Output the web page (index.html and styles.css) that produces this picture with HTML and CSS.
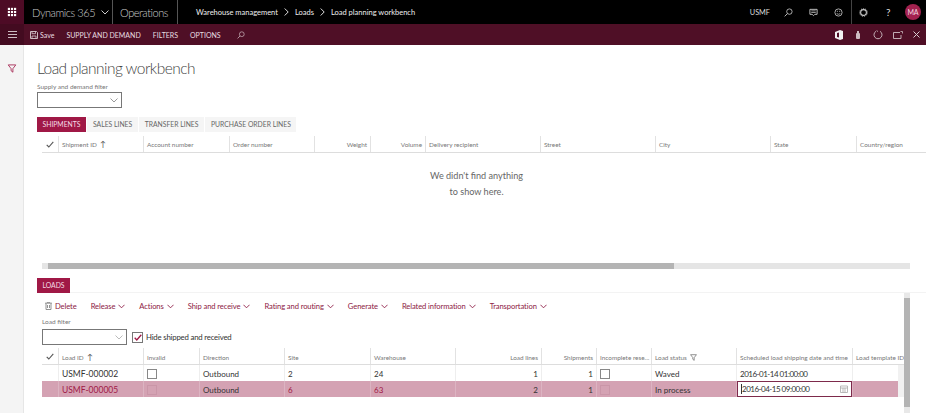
FILE: index.html
```html
<!DOCTYPE html>
<html lang="en">
<head>
    <meta charset="UTF-8">
    <meta name="viewport" content="width=device-width, initial-scale=1.0">
    <title>Load planning workbench</title>
    <link rel="stylesheet" href="styles.css">
</head>
<body>

    <div class="topbar">
        <div class="waffle">
            <svg width="10" height="10" viewBox="0 0 12 12" fill="#fff"><rect x="1" y="1" width="2.6" height="2.6"/><rect x="4.7" y="1" width="2.6" height="2.6"/><rect x="8.4" y="1" width="2.6" height="2.6"/><rect x="1" y="4.7" width="2.6" height="2.6"/><rect x="4.7" y="4.7" width="2.6" height="2.6"/><rect x="8.4" y="4.7" width="2.6" height="2.6"/><rect x="1" y="8.4" width="2.6" height="2.6"/><rect x="4.7" y="8.4" width="2.6" height="2.6"/><rect x="8.4" y="8.4" width="2.6" height="2.6"/></svg>
        </div>
        <div class="brand brand-first"><span>Dynamics 365</span>
            <svg width="8" height="5" viewBox="0 0 8 5"><path d="M.5.5L4 4 7.5.5" fill="none" stroke="#ccc"/></svg>
        </div>
        <div class="brand brand-second">Operations</div>
        <div class="crumbs">
            <span>Warehouse management</span>
            <svg width="5" height="8" viewBox="0 0 5 8"><path d="M.7.5L4.2 4 .7 7.5" fill="none" stroke="#ddd"/></svg>
            <span>Loads</span>
            <svg width="5" height="8" viewBox="0 0 5 8"><path d="M.7.5L4.2 4 .7 7.5" fill="none" stroke="#ddd"/></svg>
            <span>Load planning workbench</span>
        </div>
        <div class="top-right">
            <span class="company">USMF</span>
            <svg class="top-icon" width="9" height="9" viewBox="0 0 10 10"><circle cx="6" cy="4" r="3" fill="none" stroke="#ccc" stroke-width=".9"/><path d="M3.8 6.2L.7 9.3" stroke="#ccc"/></svg>
            <svg class="top-icon" width="9" height="9" viewBox="0 0 10 10"><path d="M1 1.5h8v5.5H6.5L5 8.5 3.5 7H1z" fill="none" stroke="#ccc"/><path d="M2.5 3.2h5M2.5 5h5" stroke="#ccc" stroke-width=".8"/></svg>
            <svg class="top-icon" width="9" height="9" viewBox="0 0 10 10"><circle cx="5" cy="5" r="4" fill="none" stroke="#ccc" stroke-width=".9"/><path d="M3 6.2q2 1.5 4 0" fill="none" stroke="#ccc" stroke-width=".8"/><path d="M3.2 3.7h1M5.8 3.7h1" stroke="#ccc"/></svg>
            <span class="top-divider"></span>
            <svg class="top-icon" width="9" height="9" viewBox="0 0 10 10"><circle cx="5" cy="5" r="3.2" fill="none" stroke="#ccc" stroke-width="1.2"/><circle cx="5" cy="5" r="4.3" fill="none" stroke="#ccc" stroke-width=".9" stroke-dasharray="1.3 1.1"/></svg>
            <span class="help">?</span>
            <span class="avatar">MA</span>
        </div>
    </div>

    <div class="cmdbar">
        <div class="hamburger"><span></span><span></span><span></span></div>
        <div class="cmd-left">
            <span class="cmd-save">
                <svg width="8" height="8" viewBox="0 0 8 8"><path d="M.5.5h6l1 1v6h-7z" fill="none" stroke="#d9ccd0" stroke-width=".9"/><path d="M2 .5v2.200h3.500V.5M2 7.500V5h4v2.500" fill="none" stroke="#d9ccd0" stroke-width=".8"/></svg>
                Save
            </span>
            <span class="cmd-item">SUPPLY AND DEMAND</span>
            <span class="cmd-item">FILTERS</span>
            <span class="cmd-item">OPTIONS</span>
            <svg class="cmd-search" width="8" height="8" viewBox="0 0 10 10"><circle cx="6" cy="4" r="3" fill="none" stroke="#c9b3ba" stroke-width=".9"/><path d="M3.8 6.2L.7 9.3" stroke="#c9b3ba"/></svg>
        </div>
        <div class="cmd-right">
            <svg width="8" height="10" viewBox="0 0 8 10"><path d="M0 2l5-2 3 1v8l-3 1-5-2z" fill="#f2f2f2"/><path d="M2 3l2-.5v5L2 7z" fill="#4f0f26"/></svg>
            <svg width="4" height="8" viewBox="0 0 4 8"><rect y="2" width="4" height="6" rx="1" fill="#cdbcc2"/><rect x="1" width="2" height="3" fill="#cdbcc2"/></svg>
            <svg width="10" height="10" viewBox="0 0 10 10"><path d="M3 1.3a4 4 0 1 0 4 0" fill="none" stroke="#cdbcc2" stroke-width=".9"/><path d="M3.8.3l.8 1.5" stroke="#cdbcc2" stroke-width=".8"/></svg>
            <svg class="popout" width="10" height="8" viewBox="0 0 10 8"><path d="M7 1.500H.5v6h7.500V4" fill="none" stroke="#cdbcc2" stroke-width=".9"/><path d="M7.500.5h2v2" fill="none" stroke="#cdbcc2" stroke-width=".8"/></svg>
            <svg class="close" width="7" height="7" viewBox="0 0 7 7"><path d="M.5.5l6 6M6.500.5l-6 6" stroke="#d9ccd0"/></svg>
        </div>
    </div>

    <div class="main">
        <div class="rail">
            <svg width="10" height="9" viewBox="0 0 10 10"><path d="M.8 1h8.400L6 5.200v3.900L4 7.500V5.200z" fill="none" stroke="#a01846" stroke-width=".9"/></svg>
        </div>

        <div class="content">
            <h1 class="page-title">Load planning workbench</h1>
            <div class="field-label">Supply and demand filter</div>
            <div class="combo">
                <svg width="8" height="5" viewBox="0 0 8 5"><path d="M.5.5L4 4 7.5.5" fill="none" stroke="#999"/></svg>
            </div>

            <div class="tabs">
                <span class="tab active">SHIPMENTS</span>
                <span class="tab">SALES LINES</span>
                <span class="tab">TRANSFER LINES</span>
                <span class="tab">PURCHASE ORDER LINES</span>
            </div>

            <div class="grid-row grid-head ship-cols">
                <div class="cell check"><svg width="8" height="7" viewBox="0 0 8 7"><path d="M.7 3.8L2.8 6 7.3.8" fill="none" stroke="#555" stroke-width="1.1"/></svg></div>
                <div class="cell">Shipment ID <span class="sort">↑</span></div>
                <div class="cell">Account number</div>
                <div class="cell">Order number</div>
                <div class="cell num">Weight</div>
                <div class="cell num">Volume</div>
                <div class="cell">Delivery recipient</div>
                <div class="cell">Street</div>
                <div class="cell">City</div>
                <div class="cell">State</div>
                <div class="cell">Country/region</div>
            </div>

            <div class="empty">We didn't find anything<br>to show here.</div>

            <div class="hscroll"><div class="hscroll-thumb"></div></div>

            <div class="tabs tabs-loads">
                <span class="tab active">LOADS</span>
            </div>

            <div class="loads">
                <div class="loads-body">
                    <div class="actions">
                        <span class="action">
                            <svg width="7" height="8" viewBox="0 0 7 8"><path d="M0 1.200h7M2.300 1V.3h2.400V1M1 1.500v6h5v-6M2.500 3v3M4.500 3v3" fill="none" stroke="#777" stroke-width=".8"/></svg>
                            Delete
                        </span>
                        <span class="action">Release <svg class="chev" viewBox="0 0 8 5"><path d="M.5.5L4 4 7.5.5"/></svg></span>
                        <span class="action">Actions <svg class="chev" viewBox="0 0 8 5"><path d="M.5.5L4 4 7.5.5"/></svg></span>
                        <span class="action">Ship and receive <svg class="chev" viewBox="0 0 8 5"><path d="M.5.5L4 4 7.5.5"/></svg></span>
                        <span class="action">Rating and routing <svg class="chev" viewBox="0 0 8 5"><path d="M.5.5L4 4 7.5.5"/></svg></span>
                        <span class="action">Generate <svg class="chev" viewBox="0 0 8 5"><path d="M.5.5L4 4 7.5.5"/></svg></span>
                        <span class="action">Related information <svg class="chev" viewBox="0 0 8 5"><path d="M.5.5L4 4 7.5.5"/></svg></span>
                        <span class="action">Transportation <svg class="chev" viewBox="0 0 8 5"><path d="M.5.5L4 4 7.5.5"/></svg></span>
                    </div>

                    <div class="field-label">Load filter</div>
                    <div class="filter-row">
                        <div class="combo">
                            <svg width="8" height="5" viewBox="0 0 8 5"><path d="M.5.5L4 4 7.5.5" fill="none" stroke="#bbb"/></svg>
                        </div>
                        <span class="hide-check"><svg width="8" height="7" viewBox="0 0 8 7"><path d="M.7 3.8L2.8 6 7.3.8" fill="none" stroke="#a01846" stroke-width="1.3"/></svg></span>
                        <span class="hide-label">Hide shipped and received</span>
                    </div>

                    <div class="grid-row grid-head load-head load-cols">
                        <div class="cell check"><svg width="8" height="7" viewBox="0 0 8 7"><path d="M.7 3.8L2.8 6 7.3.8" fill="none" stroke="#555" stroke-width="1.1"/></svg></div>
                        <div class="cell">Load ID <span class="sort">↑</span></div>
                        <div class="cell">Invalid</div>
                        <div class="cell">Direction</div>
                        <div class="cell">Site</div>
                        <div class="cell">Warehouse</div>
                        <div class="cell num">Load lines</div>
                        <div class="cell num">Shipments</div>
                        <div class="cell">Incomplete rese...</div>
                        <div class="cell">Load status <svg width="7" height="7" viewBox="0 0 10 10"><path d="M.8 1h8.400L6 5.200v3.900L4 7.500V5.200z" fill="none" stroke="#666"/></svg></div>
                        <div class="cell">Scheduled load shipping date and time</div>
                        <div class="cell">Load template ID</div>
                    </div>

                    <div class="rows-wrap">
                        <div class="rows">
                            <div class="grid-row data-row data-cols">
                                <div class="cell check"></div>
                                <div class="cell load-id">USMF-000002</div>
                                <div class="cell"><span class="box"></span></div>
                                <div class="cell">Outbound</div>
                                <div class="cell">2</div>
                                <div class="cell">24</div>
                                <div class="cell num">1</div>
                                <div class="cell num">1</div>
                                <div class="cell"><span class="box"></span></div>
                                <div class="cell">Waved</div>
                                <div class="cell date">2016-01-14 01:00:00</div>
                                <div class="cell"></div>
                            </div>

                            <div class="grid-row data-row selected data-cols">
                                <div class="cell check"></div>
                                <div class="cell load-id link">USMF-000005</div>
                                <div class="cell"><span class="box"></span></div>
                                <div class="cell">Outbound</div>
                                <div class="cell link">6</div>
                                <div class="cell link">63</div>
                                <div class="cell num">2</div>
                                <div class="cell num">1</div>
                                <div class="cell"><span class="box"></span></div>
                                <div class="cell">In process</div>
                                <div class="cell date-cell">
                                    <div class="date-input">
                                        <span class="date caret">2016-04-15 09:00:00</span>
                                        <svg width="8" height="8" viewBox="0 0 8 8"><path d="M.5 1h7v6.500h-7zM.5 3h7M3 3v4.500M5 3v4.500" fill="none" stroke="#aaa" stroke-width=".8"/></svg>
                                    </div>
                                </div>
                                <div class="cell"></div>
                            </div>
                        </div>
                        <div class="inner-scroll"></div>
                    </div>
                </div>
                <div class="vscroll"><div class="vscroll-thumb"></div></div>
            </div>
        </div>
    </div>

</body>
</html>
```

FILE: styles.css
```css
html, body { margin: 0; padding: 0; height: 100%; overflow: hidden; }
body { font-family: Lato, "Open Sans", sans-serif; background: #fff; color: #333; font-size: 8px; width: 926px; height: 413px; }

.topbar { display: flex; align-items: center; height: 24px; background: #000; color: #fff; }
.waffle { width: 24px; height: 24px; background: #4d0b25; display: flex; align-items: center; justify-content: center; }
.brand { height: 24px; display: flex; align-items: center; font-size: 11px; letter-spacing: -.45px; font-weight: 300; color: #ccc; border-right: 1px solid #555; box-sizing: border-box; white-space: nowrap; }
.brand-first { width: 89px; padding-left: 8px; gap: 6px; }
.brand-second { width: 65px; padding-left: 7px; }
.crumbs { display: flex; align-items: center; gap: 6px; margin-left: 18px; font-size: 7.5px; color: #eee; }
.top-right { margin-left: auto; display: flex; align-items: center; height: 24px; font-size: 7.3px; color: #ddd; }
.company { margin-right: 14px; }
.top-icon { margin-right: 16px; }
.top-divider { width: 1px; height: 24px; background: #444; margin: 0 7px 0 -8px; }
.help { font-size: 10px; width: 5px; margin: 0 14px 0 2px; }
.avatar { width: 16px; height: 16px; border-radius: 50%; background: #a3224f; color: #f3d7e0; font-size: 7px; display: flex; align-items: center; justify-content: center; margin-right: 5px; }

.cmdbar { display: flex; align-items: center; height: 21px; background: #4f0f26; color: #e8dde0; font-size: 7px; }
.hamburger { width: 24px; height: 21px; background: #430b20; display: flex; flex-direction: column; gap: 2px; align-items: center; justify-content: center; }
.hamburger span { width: 9px; height: 1px; background: #cdbcc2; }
.cmd-left { display: flex; align-items: center; margin-left: 6px; }
.cmd-save { display: flex; align-items: center; gap: 2px; margin-right: 12px; }
.cmd-item { margin-right: 12px; }
.cmd-search { margin-left: 4px; }
.cmd-right { margin-left: auto; display: flex; align-items: center; gap: 13px; margin-right: 6px; }
.popout { margin-left: -3px; }
.close { margin-left: -3px; }

.main { display: flex; height: 368px; }
.rail { width: 23px; background: #f4f4f4; border-right: 1px solid #e6e6e6; display: flex; justify-content: center; padding-top: 19px; }
.content { flex: 1; padding-left: 13px; min-width: 0; }

.page-title { margin: 11px 0 0 0; height: 25px; line-height: 25px; font-size: 15.5px; letter-spacing: -.55px; font-weight: 300; color: #444; }
.field-label { font-size: 6.5px; line-height: 8px; color: #777; margin: 2px 0 1px; }
.combo { width: 85px; height: 16px; box-sizing: border-box; border: 1px solid #777; background: #fff; display: flex; align-items: center; justify-content: flex-end; padding-right: 3px; }

.tabs { display: flex; gap: 1.5px; margin-top: 9px; height: 15px; }
.tab { background: #f5f5f5; color: #666; font-size: 6.8px; line-height: 15px; padding: 0 5.5px; }
.tab.active { background: #a01846; color: #f5dce5; }

.grid-row { display: grid; margin-left: 5px; }
.ship-cols { grid-template-columns: 16px 85px 86px 85px 56px 55px 115px 115px 115px 86px 56px; margin-top: 4px; }
.load-cols { grid-template-columns: 16px 85px 56px 85px 86px 85px 86px 55px 55px 85px 116px 53px; }
.data-cols { grid-template-columns: 16px 85px 56px 85px 86px 85px 86px 55px 55px 85px 116px 46px; }
.grid-head { height: 17px; border-bottom: 1px solid #ddd; box-sizing: border-box; }
.load-head .cell { padding-top: 2px; }
.cell { border-left: 1px solid #e2e2e2; padding: 0 3px; display: flex; align-items: center; gap: 3px; white-space: nowrap; overflow: hidden; min-width: 0; box-sizing: border-box; }
.grid-head .cell { font-size: 6.4px; color: #777; }
.cell.num { justify-content: flex-end; }
.cell.check { border-left: 0; justify-content: center; padding: 0; }
.sort { font-size: 8px; color: #555; }

.empty { font-size: 9.1px; line-height: 16px; text-align: center; color: #666; margin-top: 15px; height: 95px; padding-right: 10px; }
.hscroll { margin-left: 5px; width: 868px; height: 6px; background: #e5e5e5; padding-left: 6px; box-sizing: border-box; }
.hscroll-thumb { width: 626px; height: 6px; background: #b4b4b4; }

.tabs-loads { margin-top: 9px; }
.loads { display: flex; border-top: 1px solid #f3f3f3; margin-top: -1px; }
.loads-body { width: 868px; }
.actions { display: flex; align-items: center; height: 20px; padding-left: 8px; margin-top: 3px; }
.action { display: flex; align-items: center; gap: 3px; font-size: 7.6px; letter-spacing: -.1px; color: #8d1a43; margin-right: 14px; white-space: nowrap; }
.chev { width: 7px; height: 5px; fill: none; stroke: #8d1a43; }

.loads .field-label { margin: 2px 0 3px 5px; }
.filter-row { display: flex; align-items: center; margin-left: 5px; height: 16px; margin-bottom: 3px; }
.hide-check { width: 11px; height: 11px; border: 1px solid #777; display: flex; align-items: center; justify-content: center; margin-left: 5px; box-sizing: border-box; }
.hide-label { font-size: 7.8px; letter-spacing: -.2px; color: #333; margin-left: 3px; }

.rows-wrap { display: flex; }
.rows { width: 861px; }
.inner-scroll { width: 6px; height: 32px; background: #f1f1f1; }
.data-row { height: 16px; color: #333; }
.data-row .cell { border-left-color: #eee; padding-top: 1px; }
.load-id { font-size: 8.5px; }
.date { letter-spacing: -.5px; }
.caret { border-left: 1px solid #333; }
.box { width: 10px; height: 10px; border: 1px solid #888; box-sizing: border-box; background: #fff; }
.selected { background: #d4a2b3; }
.selected .cell { border-left-color: #dcb4c2; }
.selected .box { background: #d4a2b3; border-color: #ca96a8; }
.link { color: #a01846; }
.data-row .date-cell { padding: 0; }
.date-input { width: 100%; height: 16px; box-sizing: border-box; border: 1px solid #7d2a4b; background: #fff; display: flex; align-items: center; justify-content: space-between; padding: 0 3px; }

.vscroll { width: 6px; height: 121px; background: #e8e8e8; padding-top: 5px; box-sizing: border-box; margin-left: -1px; }
.vscroll-thumb { height: 109px; background: #b4b4b4; }
```
